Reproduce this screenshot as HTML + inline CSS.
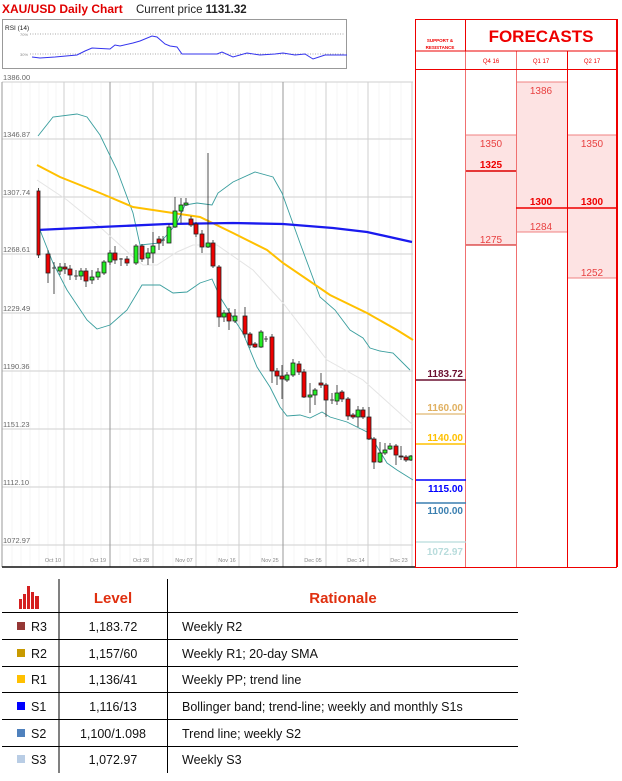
<!DOCTYPE html>
<html><head><meta charset="utf-8"><style>
body{margin:0;background:#fff;width:622px;height:781px;overflow:hidden;font-family:"Liberation Sans",sans-serif}
svg{position:absolute;left:0;top:0}
</style></head><body>
<svg width="622" height="781" viewBox="0 0 622 781" xmlns="http://www.w3.org/2000/svg" font-family="Liberation Sans, sans-serif">
<text x="2" y="13" fill="#e00000" font-size="12" font-weight="bold">XAU/USD Daily Chart</text>
<text x="136" y="13" fill="#222" font-size="11.5">Current price <tspan font-weight="bold">1131.32</tspan></text>
<!-- RSI -->
<rect x="2.5" y="19.5" width="344" height="49" fill="#fff" stroke="#999"/>
<text x="5" y="30" font-size="6.5" fill="#222">RSI (14)</text>
<line x1="30" y1="34" x2="345" y2="34" stroke="#aaa" stroke-dasharray="1,1.5"/>
<line x1="30" y1="54" x2="345" y2="54" stroke="#aaa" stroke-dasharray="1,1.5"/>
<text x="20" y="36" font-size="4" fill="#888">70%</text>
<text x="20" y="56" font-size="4" fill="#888">30%</text>
<polyline fill="none" stroke="#3333ee" stroke-width="1" points="32,57 40,58 55,57 77,55 85,51 92,48 110,49 115,45 120,46 133,43 140,41 152,36 157,37 165,44 170,46 177,47 182,54 217,54 222,52 233,57 247,53 260,55 275,54 283,53 295,55 305,54 313,59 325,55 347,55"/>
<!-- main chart grid -->
<g stroke="#f6f6f6">
<line x1="12" y1="82" x2="12" y2="567"/><line x1="21" y1="82" x2="21" y2="567"/><line x1="30" y1="82" x2="30" y2="567"/><line x1="39" y1="82" x2="39" y2="567"/><line x1="48" y1="82" x2="48" y2="567"/><line x1="56" y1="82" x2="56" y2="567"/><line x1="74" y1="82" x2="74" y2="567"/><line x1="83" y1="82" x2="83" y2="567"/><line x1="92" y1="82" x2="92" y2="567"/><line x1="101" y1="82" x2="101" y2="567"/><line x1="120" y1="82" x2="120" y2="567"/><line x1="130" y1="82" x2="130" y2="567"/><line x1="140" y1="82" x2="140" y2="567"/><line x1="163" y1="82" x2="163" y2="567"/><line x1="173" y1="82" x2="173" y2="567"/><line x1="185" y1="82" x2="185" y2="567"/><line x1="206" y1="82" x2="206" y2="567"/><line x1="217" y1="82" x2="217" y2="567"/><line x1="228" y1="82" x2="228" y2="567"/><line x1="250" y1="82" x2="250" y2="567"/><line x1="261" y1="82" x2="261" y2="567"/><line x1="272" y1="82" x2="272" y2="567"/><line x1="294" y1="82" x2="294" y2="567"/><line x1="305" y1="82" x2="305" y2="567"/><line x1="316" y1="82" x2="316" y2="567"/><line x1="337" y1="82" x2="337" y2="567"/><line x1="347" y1="82" x2="347" y2="567"/><line x1="358" y1="82" x2="358" y2="567"/><line x1="379" y1="82" x2="379" y2="567"/><line x1="390" y1="82" x2="390" y2="567"/><line x1="401" y1="82" x2="401" y2="567"/>
</g>
<g stroke="#cfcfcf">
<line x1="2" y1="82" x2="413" y2="82"/><line x1="2" y1="139" x2="413" y2="139"/><line x1="2" y1="197" x2="413" y2="197"/><line x1="2" y1="254" x2="413" y2="254"/><line x1="2" y1="313" x2="413" y2="313"/><line x1="2" y1="371" x2="413" y2="371"/><line x1="2" y1="429" x2="413" y2="429"/><line x1="2" y1="487" x2="413" y2="487"/><line x1="2" y1="545" x2="413" y2="545"/>
<line x1="64" y1="82" x2="64" y2="567"/><line x1="153" y1="82" x2="153" y2="567"/><line x1="196" y1="82" x2="196" y2="567"/><line x1="239" y1="82" x2="239" y2="567"/><line x1="326" y1="82" x2="326" y2="567"/><line x1="368" y1="82" x2="368" y2="567"/><line x1="412" y1="82" x2="412" y2="567"/>
</g>
<g stroke="#999"><line x1="110" y1="82" x2="110" y2="567"/><line x1="283" y1="82" x2="283" y2="567"/><line x1="2" y1="82" x2="2" y2="567"/></g>
<g font-size="7.5" fill="#666">
<text x="3" y="80">1386.00</text><text x="3" y="137">1346.87</text><text x="3" y="195">1307.74</text><text x="3" y="252">1268.61</text><text x="3" y="311">1229.49</text><text x="3" y="369">1190.36</text><text x="3" y="427">1151.23</text><text x="3" y="485">1112.10</text><text x="3" y="543">1072.97</text>
</g>
<g font-size="5.5" fill="#888" text-anchor="middle">
<text x="53" y="562">Oct 10</text><text x="98" y="562">Oct 19</text><text x="141" y="562">Oct 28</text><text x="184" y="562">Nov 07</text><text x="227" y="562">Nov 16</text><text x="270" y="562">Nov 25</text><text x="313" y="562">Dec 05</text><text x="356" y="562">Dec 14</text><text x="399" y="562">Dec 23</text>
</g>
<line x1="2" y1="567" x2="415" y2="567" stroke="#111" stroke-width="1.5"/>
<!-- indicators -->
<polyline fill="none" stroke="#e4e4e4" stroke-width="1" points="37,180 67,200 100,227 133,257 143,265 157,265 177,252 193,245 217,245 253,270 283,303 327,360 363,380 413,425"/>
<polyline fill="none" stroke="#3a9e9e" stroke-width="0.9" points="38,136 53,117 77,114 87,117 100,135 117,170 133,213 140,245 160,243 177,223 185,205 197,203 212,205 218,193 233,182 255,172 273,177 282,193 300,243 320,297 335,310 350,330 363,338 370,348 380,351 393,353 410,370"/>
<polyline fill="none" stroke="#3a9e9e" stroke-width="0.9" points="38,225 53,263 67,290 87,320 97,329 110,325 127,310 142,285 160,285 173,293 187,292 200,283 212,279 220,297 230,313 243,333 257,367 270,387 280,407 287,416 300,415 310,418 322,412 330,417 347,422 367,432 373,440 387,463 397,470 413,480"/>
<polyline fill="none" stroke="#ffc000" stroke-width="2" points="37,165 60,177 100,193 133,207 173,213 200,217 233,233 267,250 283,263 330,295 367,313 397,330 413,340"/>
<polyline fill="none" stroke="#1a1aee" stroke-width="2.3" points="37,230 100,227 167,224 233,223 283,224 333,228 367,232 412,242"/>
<!-- candles -->
<g stroke="#222" stroke-width="0.8">
<line x1="38.5" y1="188" x2="38.5" y2="258"/><rect x="37" y="191" width="3" height="64" fill="#e00"/>
<line x1="48" y1="250" x2="48" y2="283"/><rect x="46" y="254" width="4" height="19" fill="#e00"/>
<line x1="54" y1="262" x2="54" y2="294"/><line x1="52" y1="268" x2="56" y2="268"/>
<line x1="60" y1="263" x2="60" y2="275"/><rect x="58" y="267" width="4" height="4" fill="#2e2"/>
<line x1="65" y1="263" x2="65" y2="274"/><rect x="63" y="267" width="4" height="2" fill="#e00"/>
<line x1="70" y1="265" x2="70" y2="280"/><rect x="68" y="269" width="4" height="6" fill="#e00"/>
<line x1="76" y1="270" x2="76" y2="280"/><line x1="74" y1="276" x2="78" y2="276"/>
<line x1="81" y1="268" x2="81" y2="280"/><rect x="79" y="271" width="4" height="5" fill="#2e2"/>
<line x1="86" y1="268" x2="86" y2="287"/><rect x="84" y="271" width="4" height="10" fill="#e00"/>
<line x1="92" y1="270" x2="92" y2="284"/><rect x="90" y="277" width="4" height="3" fill="#2e2"/>
<line x1="98" y1="268" x2="98" y2="280"/><rect x="96" y="272" width="4" height="5" fill="#2e2"/>
<line x1="104" y1="260" x2="104" y2="275"/><rect x="102" y="262" width="4" height="11" fill="#2e2"/>
<line x1="110" y1="250" x2="110" y2="265"/><rect x="108" y="253" width="4" height="9" fill="#2e2"/>
<line x1="115" y1="246" x2="115" y2="264"/><rect x="113" y="253" width="4" height="7" fill="#e00"/>
<line x1="121" y1="258" x2="121" y2="266"/><line x1="119" y1="259" x2="123" y2="259"/>
<line x1="127" y1="256" x2="127" y2="266"/><rect x="125" y="259" width="4" height="4" fill="#e00"/>
<line x1="136" y1="244" x2="136" y2="265"/><rect x="134" y="246" width="4" height="17" fill="#2e2"/>
<line x1="142" y1="244" x2="142" y2="262"/><rect x="140" y="246" width="4" height="13" fill="#e00"/>
<line x1="148" y1="248" x2="148" y2="265"/><rect x="146" y="253" width="4" height="5" fill="#2e2"/>
<line x1="153" y1="232" x2="153" y2="263"/><rect x="151" y="246" width="4" height="7" fill="#2e2"/>
<line x1="159" y1="236" x2="159" y2="250"/><rect x="157" y="239" width="4" height="4" fill="#e00"/>
<line x1="163" y1="236" x2="163" y2="246"/><line x1="161" y1="240" x2="165" y2="240"/>
<line x1="169" y1="224" x2="169" y2="243"/><rect x="167" y="227" width="4" height="16" fill="#2e2"/>
<line x1="175" y1="197" x2="175" y2="228"/><rect x="173" y="211" width="4" height="16" fill="#2e2"/>
<line x1="181" y1="198" x2="181" y2="223"/><rect x="179" y="205" width="4" height="6" fill="#2e2"/>
<line x1="186" y1="198" x2="186" y2="206"/><rect x="184" y="203" width="4" height="2" fill="#2e2"/>
<line x1="191" y1="216" x2="191" y2="227"/><rect x="189" y="219" width="4" height="6" fill="#e00"/>
<line x1="196" y1="222" x2="196" y2="237"/><rect x="194" y="224" width="4" height="10" fill="#e00"/>
<line x1="202" y1="230" x2="202" y2="253"/><rect x="200" y="234" width="4" height="13" fill="#e00"/>
<line x1="208" y1="153" x2="208" y2="248"/><rect x="206" y="243" width="4" height="4" fill="#2e2"/>
<line x1="213" y1="240" x2="213" y2="268"/><rect x="211" y="243" width="4" height="23" fill="#e00"/>
<line x1="219" y1="265" x2="219" y2="327"/><rect x="217" y="267" width="4" height="50" fill="#e00"/>
<line x1="224" y1="310" x2="224" y2="322"/><rect x="222" y="313" width="4" height="4" fill="#2e2"/>
<line x1="229" y1="308" x2="229" y2="330"/><rect x="227" y="313" width="4" height="8" fill="#e00"/>
<line x1="235" y1="309" x2="235" y2="323"/><rect x="233" y="316" width="4" height="5" fill="#2e2"/>
<line x1="245" y1="307" x2="245" y2="338"/><rect x="243" y="316" width="4" height="18" fill="#e00"/>
<line x1="250" y1="332" x2="250" y2="348"/><rect x="248" y="334" width="4" height="11" fill="#e00"/>
<line x1="255" y1="342" x2="255" y2="348"/><rect x="253" y="344" width="4" height="3" fill="#e00"/>
<line x1="261" y1="330" x2="261" y2="348"/><rect x="259" y="332" width="4" height="15" fill="#2e2"/>
<line x1="266" y1="336" x2="266" y2="342"/><line x1="264" y1="339" x2="268" y2="339"/>
<line x1="272" y1="334" x2="272" y2="383"/><rect x="270" y="337" width="4" height="34" fill="#e00"/>
<line x1="277" y1="368" x2="277" y2="385"/><rect x="275" y="371" width="4" height="5" fill="#e00"/>
<line x1="282" y1="365" x2="282" y2="399"/><rect x="280" y="376" width="4" height="3" fill="#e00"/>
<line x1="287" y1="372" x2="287" y2="382"/><rect x="285" y="375" width="4" height="5" fill="#2e2"/>
<line x1="293" y1="359" x2="293" y2="377"/><rect x="291" y="363" width="4" height="12" fill="#2e2"/>
<line x1="299" y1="361" x2="299" y2="375"/><rect x="297" y="364" width="4" height="8" fill="#e00"/>
<line x1="304" y1="369" x2="304" y2="398"/><rect x="302" y="372" width="4" height="25" fill="#e00"/>
<line x1="310" y1="383" x2="310" y2="413"/><rect x="308" y="395" width="4" height="2" fill="#2e2"/>
<line x1="315" y1="388" x2="315" y2="405"/><rect x="313" y="390" width="4" height="5" fill="#2e2"/>
<line x1="321" y1="373" x2="321" y2="388"/><rect x="319" y="383" width="4" height="2" fill="#e00"/>
<line x1="326" y1="383" x2="326" y2="417"/><rect x="324" y="385" width="4" height="15" fill="#e00"/>
<line x1="332" y1="393" x2="332" y2="404"/><line x1="330" y1="400" x2="334" y2="400"/>
<line x1="337" y1="385" x2="337" y2="405"/><rect x="335" y="393" width="4" height="8" fill="#2e2"/>
<line x1="342" y1="390" x2="342" y2="402"/><rect x="340" y="392" width="4" height="7" fill="#e00"/>
<line x1="348" y1="397" x2="348" y2="420"/><rect x="346" y="399" width="4" height="17" fill="#e00"/>
<line x1="353" y1="413" x2="353" y2="419"/><rect x="351" y="415" width="4" height="2" fill="#e00"/>
<line x1="358" y1="406" x2="358" y2="427"/><rect x="356" y="410" width="4" height="7" fill="#2e2"/>
<line x1="363" y1="407" x2="363" y2="419"/><rect x="361" y="410" width="4" height="7" fill="#e00"/>
<line x1="369" y1="407" x2="369" y2="440"/><rect x="367" y="417" width="4" height="22" fill="#e00"/>
<line x1="374" y1="437" x2="374" y2="469"/><rect x="372" y="439" width="4" height="23" fill="#e00"/>
<line x1="380" y1="442" x2="380" y2="463"/><rect x="378" y="453" width="4" height="9" fill="#2e2"/>
<line x1="385" y1="443" x2="385" y2="455"/><rect x="383" y="450" width="4" height="3" fill="#2e2"/>
<line x1="390" y1="443" x2="390" y2="450"/><rect x="388" y="446" width="4" height="3" fill="#2e2"/>
<line x1="396" y1="444" x2="396" y2="465"/><rect x="394" y="446" width="4" height="9" fill="#e00"/>
<line x1="401" y1="446" x2="401" y2="460"/><rect x="399" y="456" width="4" height="1" fill="#e00"/>
<line x1="406" y1="455" x2="406" y2="462"/><rect x="404" y="457" width="4" height="3" fill="#e00"/>
<line x1="411" y1="455" x2="411" y2="461"/><rect x="409" y="456" width="3" height="4" fill="#2e2"/>
</g>
<!-- forecast panel -->
<rect x="466" y="135" width="50" height="110" fill="#fde3e3"/>
<rect x="516" y="82" width="51" height="150" fill="#fde3e3"/>
<rect x="567" y="135" width="50" height="143" fill="#fde3e3"/>
<g stroke="#f08080" stroke-width="1">
<line x1="466" y1="135" x2="516" y2="135"/><line x1="516" y1="82" x2="567" y2="82"/><line x1="567" y1="135" x2="617" y2="135"/>
<line x1="516" y1="232" x2="567" y2="232"/><line x1="567" y1="278" x2="617" y2="278"/>
</g>
<line x1="465.5" y1="51" x2="465.5" y2="567" stroke="#f07070"/>
<line x1="516.5" y1="51" x2="516.5" y2="567" stroke="#f07070"/>
<line x1="415" y1="51" x2="617" y2="51" stroke="#e00"/>
<line x1="466" y1="171" x2="516" y2="171" stroke="#d00" stroke-width="1.5"/>
<line x1="516" y1="208" x2="617" y2="208" stroke="#e00" stroke-width="1.5"/>
<line x1="466" y1="245" x2="516" y2="245" stroke="#c00" stroke-width="1"/>
<rect x="415.5" y="19.5" width="201" height="548" fill="none" stroke="#e00" stroke-width="1"/>
<line x1="617" y1="19" x2="617" y2="567" stroke="#e00" stroke-width="2"/>
<line x1="465.5" y1="19" x2="465.5" y2="51" stroke="#e00"/>
<line x1="567.5" y1="51" x2="567.5" y2="567" stroke="#e00"/>
<line x1="415" y1="69.5" x2="617" y2="69.5" stroke="#e00"/>
<text x="440" y="42" font-size="4.5" fill="#e00" text-anchor="middle" font-weight="bold">SUPPORT &amp;</text>
<text x="440" y="49" font-size="4.5" fill="#e00" text-anchor="middle" font-weight="bold">RESISTANCE</text>
<text x="541" y="42" font-size="17" fill="#e00" text-anchor="middle" font-weight="bold">FORECASTS</text>
<g font-size="6" fill="#e00" text-anchor="middle"><text x="491" y="63">Q4 16</text><text x="541" y="63">Q1 17</text><text x="592" y="63">Q2 17</text></g>
<g font-size="10" fill="#e84040" text-anchor="middle">
<text x="491" y="147">1350</text><text x="491" y="243">1275</text>
<text x="541" y="94">1386</text><text x="541" y="230">1284</text>
<text x="592" y="147">1350</text><text x="592" y="276">1252</text>
</g>
<g font-size="10" fill="#e00" text-anchor="middle" font-weight="bold">
<text x="491" y="168">1325</text><text x="541" y="205">1300</text><text x="592" y="205">1300</text>
</g>
<!-- S/R levels -->
<g font-size="10" font-weight="bold" text-anchor="end">
<line x1="416" y1="380" x2="466" y2="380" stroke="#6b1030" stroke-width="1.5"/><text x="463" y="377" fill="#6b1030">1183.72</text>
<line x1="416" y1="414" x2="466" y2="414" stroke="#e0b870" stroke-width="1.2"/><text x="463" y="411" fill="#e0b060">1160.00</text>
<line x1="416" y1="444" x2="466" y2="444" stroke="#ffc000" stroke-width="1.5"/><text x="463" y="441" fill="#ffc000">1140.00</text>
<line x1="416" y1="480" x2="466" y2="480" stroke="#0000ff" stroke-width="1.5"/><text x="463" y="492" fill="#0000ff">1115.00</text>
<line x1="416" y1="503" x2="466" y2="503" stroke="#3a7fb0" stroke-width="1.5"/><text x="463" y="514" fill="#3a7fb0">1100.00</text>
<line x1="416" y1="542" x2="466" y2="542" stroke="#b8dcdc" stroke-width="1.2"/><text x="463" y="555" fill="#b8dcdc">1072.97</text>
</g>
<!-- table -->
<g fill="#d42020"><rect x="19" y="599" width="3" height="10"/><rect x="23" y="594" width="3" height="15"/><rect x="27" y="586" width="3" height="23"/><rect x="31" y="592" width="3" height="17"/><rect x="35" y="596" width="4" height="13"/></g>
<g stroke="#000" stroke-width="1">
<line x1="59" y1="579" x2="59" y2="773"/><line x1="167.5" y1="579" x2="167.5" y2="773"/>
<line x1="2" y1="612.5" x2="518" y2="612.5"/><line x1="2" y1="639.5" x2="518" y2="639.5"/><line x1="2" y1="666.5" x2="518" y2="666.5"/><line x1="2" y1="692.5" x2="518" y2="692.5"/><line x1="2" y1="719.5" x2="518" y2="719.5"/><line x1="2" y1="746.5" x2="518" y2="746.5"/>
</g>
<text x="113" y="603" font-size="15" font-weight="bold" fill="#e03010" text-anchor="middle">Level</text>
<text x="343" y="603" font-size="15" font-weight="bold" fill="#e03010" text-anchor="middle">Rationale</text>
<rect x="17" y="622" width="8" height="8" fill="#953735"/><rect x="17" y="649" width="8" height="8" fill="#c89a00"/><rect x="17" y="675" width="8" height="8" fill="#ffc000"/><rect x="17" y="702" width="8" height="8" fill="#0000ff"/><rect x="17" y="729" width="8" height="8" fill="#4f81bd"/><rect x="17" y="755" width="8" height="8" fill="#b9cde5"/>
<g font-size="12.5" fill="#111">
<text x="31" y="631">R3</text><text x="31" y="658">R2</text><text x="31" y="684">R1</text><text x="31" y="711">S1</text><text x="31" y="738">S2</text><text x="31" y="764">S3</text>
<g text-anchor="middle"><text x="113" y="631">1,183.72</text><text x="113" y="658">1,157/60</text><text x="113" y="684">1,136/41</text><text x="113" y="711">1,116/13</text><text x="113" y="738">1,100/1.098</text><text x="113" y="764">1,072.97</text></g>
<text x="182" y="631">Weekly R2</text><text x="182" y="658">Weekly R1; 20-day SMA</text><text x="182" y="684">Weekly PP; trend line</text><text x="182" y="711">Bollinger band; trend-line; weekly and monthly S1s</text><text x="182" y="738">Trend line; weekly S2</text><text x="182" y="764">Weekly S3</text>
</g>
</svg>
</body></html>
